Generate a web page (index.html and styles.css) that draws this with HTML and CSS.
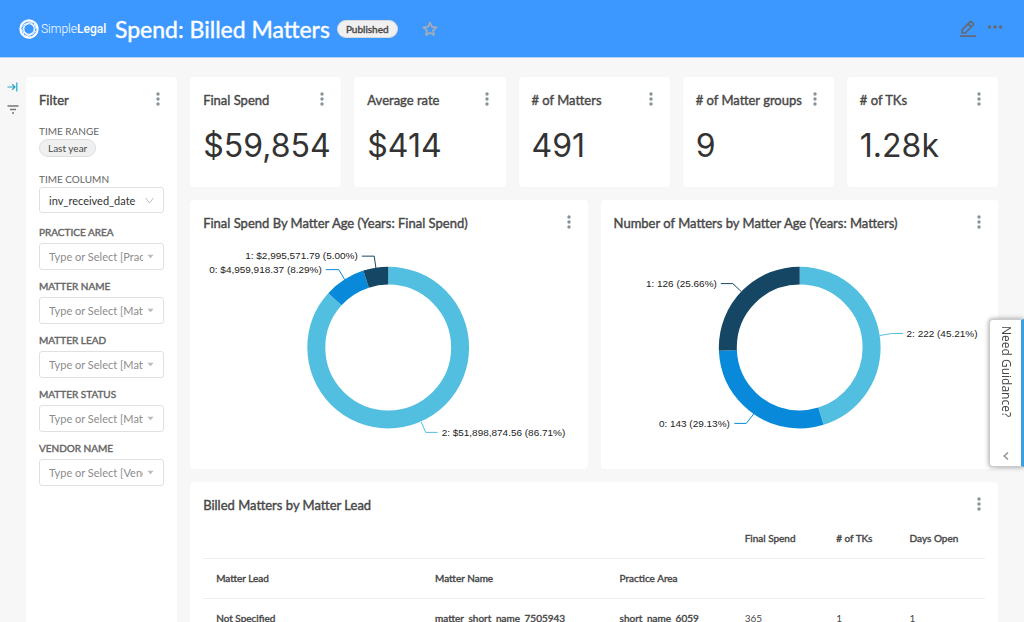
FILE: index.html
```html
<!DOCTYPE html>
<html lang="en">
<head>
<meta charset="utf-8">
<meta name="viewport" content="width=device-width, initial-scale=1">
<title>Spend: Billed Matters</title>
<link rel="stylesheet" href="styles.css">
</head>
<body>
<svg class="defs" aria-hidden="true">
  <symbol id="dots-v" viewBox="0 0 6 14"><circle cx="3" cy="2" r="1.7"/><circle cx="3" cy="7" r="1.7"/><circle cx="3" cy="12" r="1.7"/></symbol>
  <symbol id="caret" viewBox="0 0 8 5"><path d="M0.5 0.5h7L4 4.5z"/></symbol>
</svg>
<div class="app">
  <header class="topbar">
    <a class="brand" href="#" aria-label="SimpleLegal">
      <svg class="brand-mark" viewBox="0 0 20 20" fill="none" stroke="#fff">
        <g stroke-width="1.7">
          <path id="blade" d="M1.600 7.500C3.500 1.800 9.500 -.4 14.500 3.200"/>
          <use href="#blade" transform="rotate(60 10 10)"/><use href="#blade" transform="rotate(120 10 10)"/>
          <use href="#blade" transform="rotate(180 10 10)"/><use href="#blade" transform="rotate(240 10 10)"/>
          <use href="#blade" transform="rotate(300 10 10)"/>
        </g>
        <g stroke-width="1">
          <path id="inner" d="M2.500 8.500C5 4.200 10 2.800 14.800 7.200"/>
          <use href="#inner" transform="rotate(60 10 10)"/><use href="#inner" transform="rotate(120 10 10)"/>
          <use href="#inner" transform="rotate(180 10 10)"/><use href="#inner" transform="rotate(240 10 10)"/>
          <use href="#inner" transform="rotate(300 10 10)"/>
        </g>
      </svg>
      <span class="brand-name">Simple<b>Legal</b></span>
    </a>
    <h1 class="title">Spend: Billed Matters</h1>
    <span class="badge">Published</span>
    <button class="icon-btn star" aria-label="Favorite">
      <svg width="16" height="16" viewBox="0 0 16 16" fill="none" stroke="#a9adb3" stroke-width="1.700" stroke-linejoin="round"><path d="M8 1.600l1.900 4.200 4.600.5-3.400 3.100.9 4.500L8 11.700l-4 2.200.9-4.500L1.500 6.300l4.600-.5z"/></svg>
    </button>
    <div class="top-actions">
      <button class="icon-btn" aria-label="Edit dashboard">
        <svg width="16" height="18" viewBox="0 0 16 18" fill="none" stroke="#666a70" stroke-width="1.700"><path d="M2.200 13V9.800L9.900 1.900q.8-.8 1.600 0l1.500 1.500q.8.8 0 1.600L5.300 13zM8.200 3.800l3 3M0 16.200h16"/></svg>
      </button>
      <button class="icon-btn" aria-label="More options">
        <svg width="16" height="12" viewBox="0 0 16 12" fill="#666a70"><circle cx="2.500" cy="4" r="1.700"/><circle cx="8" cy="4" r="1.700"/><circle cx="13.500" cy="4" r="1.700"/></svg>
      </button>
    </div>
  </header>

  <div class="body">
    <nav class="rail">
      <button class="icon-btn" aria-label="Expand filters">
        <svg width="12" height="10" viewBox="0 0 12 10" fill="none" stroke="#20a7c9" stroke-width="1.200"><path d="M.5 5h7M5.200 2.300L8 5 5.200 7.700M9.800 .5v9"/></svg>
      </button>
      <button class="icon-btn" aria-label="Filters">
        <svg width="12" height="9" viewBox="0 0 12 9" fill="none" stroke="#777" stroke-width="1.300"><path d="M.5 1h11M3 4.500h6M5 8h2"/></svg>
      </button>
    </nav>

    <main class="grid">
      <section class="card filters">
        <div class="card-head"><h2>Filter</h2><button class="icon-btn menu" aria-label="Filter menu"><svg><use href="#dots-v"/></svg></button></div>
        <form class="filter-form">
          <div class="field range"><span class="label light">TIME RANGE</span><button type="button" class="chip">Last year</button></div>
          <div class="field column"><label class="label light" for="col">TIME COLUMN</label>
            <div class="pick solid"><select id="col"><option>inv_received_date</option></select><svg class="chev" viewBox="0 0 9 7"><path d="M.5 .8L4.500 6 8.500 .8"/></svg></div></div>
          <div class="field"><label class="label" for="pa">PRACTICE AREA</label>
            <div class="pick"><select id="pa"><option>Type or Select [Practice Area]</option></select><svg class="caret"><use href="#caret"/></svg></div></div>
          <div class="field"><label class="label" for="mn">MATTER NAME</label>
            <div class="pick"><select id="mn"><option>Type or Select [Matter Name]</option></select><svg class="caret"><use href="#caret"/></svg></div></div>
          <div class="field"><label class="label" for="ml">MATTER LEAD</label>
            <div class="pick"><select id="ml"><option>Type or Select [Matter Lead]</option></select><svg class="caret"><use href="#caret"/></svg></div></div>
          <div class="field"><label class="label" for="ms">MATTER STATUS</label>
            <div class="pick"><select id="ms"><option>Type or Select [Matter Status]</option></select><svg class="caret"><use href="#caret"/></svg></div></div>
          <div class="field"><label class="label" for="vn">VENDOR NAME</label>
            <div class="pick"><select id="vn"><option>Type or Select [Vendor Name]</option></select><svg class="caret"><use href="#caret"/></svg></div></div>
        </form>
      </section>

      <section class="card kpi"><div class="card-head"><h2>Final Spend</h2><button class="icon-btn menu" aria-label="Final Spend menu"><svg><use href="#dots-v"/></svg></button></div><p class="number">$59,854</p></section>
      <section class="card kpi"><div class="card-head"><h2>Average rate</h2><button class="icon-btn menu" aria-label="Average rate menu"><svg><use href="#dots-v"/></svg></button></div><p class="number">$414</p></section>
      <section class="card kpi"><div class="card-head"><h2># of Matters</h2><button class="icon-btn menu" aria-label="Matters menu"><svg><use href="#dots-v"/></svg></button></div><p class="number">491</p></section>
      <section class="card kpi"><div class="card-head"><h2># of Matter groups</h2><button class="icon-btn menu" aria-label="Matter groups menu"><svg><use href="#dots-v"/></svg></button></div><p class="number">9</p></section>
      <section class="card kpi"><div class="card-head"><h2># of TKs</h2><button class="icon-btn menu" aria-label="TKs menu"><svg><use href="#dots-v"/></svg></button></div><p class="number">1.28k</p></section>

      <div class="charts">
        <section class="card">
          <div class="card-head"><h2>Final Spend By Matter Age (Years: Final Spend)</h2><button class="icon-btn menu" aria-label="Chart menu"><svg><use href="#dots-v"/></svg></button></div>
          <svg class="donut" viewBox="0 0 398 225" role="img" aria-label="Final spend by matter age">
            <g class="ring" transform="rotate(-90 198.500 103.500)">
              <circle class="s2" cx="198.500" cy="103.500" r="72" pathLength="100" stroke-dasharray="86.710 100"/>
              <circle class="s0" cx="198.500" cy="103.500" r="72" pathLength="100" stroke-dasharray="8.290 100" stroke-dashoffset="-86.710"/>
              <circle class="s1" cx="198.500" cy="103.500" r="72" pathLength="100" stroke-dasharray="5 100" stroke-dashoffset="-95"/>
            </g>
            <g class="lead"><path class="s1" d="M172 12h12.500l1.700 12"/><path class="s0" d="M136 25.500h13l6 10"/><path class="s2" d="M231.500 178l4.500 10.500h12"/></g>
            <text x="168" y="15" text-anchor="end">1: $2,995,571.79 (5.00%)</text>
            <text x="132" y="29" text-anchor="end">0: $4,959,918.37 (8.29%)</text>
            <text x="252" y="192">2: $51,898,874.56 (86.71%)</text>
          </svg>
        </section>
        <section class="card">
          <div class="card-head"><h2>Number of Matters by Matter Age (Years: Matters)</h2><button class="icon-btn menu" aria-label="Chart menu"><svg><use href="#dots-v"/></svg></button></div>
          <svg class="donut" viewBox="0 0 398 225" role="img" aria-label="Number of matters by matter age">
            <g class="ring" transform="rotate(-90 199 103.500)">
              <circle class="s2" cx="199" cy="103.500" r="72" pathLength="100" stroke-dasharray="45.210 100"/>
              <circle class="s0" cx="199" cy="103.500" r="72" pathLength="100" stroke-dasharray="29.130 100" stroke-dashoffset="-45.210"/>
              <circle class="s1" cx="199" cy="103.500" r="72" pathLength="100" stroke-dasharray="25.660 100" stroke-dashoffset="-74.340"/>
            </g>
            <g class="lead"><path class="s1" d="M120 39.500h12l8.500 8"/><path class="s0" d="M133.500 179.500h12l7.500-9.500"/><path class="s2" d="M279 91.500l12-2h11.500"/></g>
            <text x="116" y="43" text-anchor="end">1: 126 (25.66%)</text>
            <text x="129" y="183" text-anchor="end">0: 143 (29.13%)</text>
            <text x="306" y="93">2: 222 (45.21%)</text>
          </svg>
        </section>
      </div>

      <section class="card matters">
        <div class="card-head"><h2>Billed Matters by Matter Lead</h2><button class="icon-btn menu" aria-label="Table menu"><svg><use href="#dots-v"/></svg></button></div>
        <table class="table">
          <colgroup><col class="c-lead"><col class="c-name"><col class="c-area"><col class="c-spend"><col class="c-tks"><col class="c-days"></colgroup>
          <thead>
            <tr><td colspan="3"></td><th>Final Spend</th><th># of TKs</th><th>Days Open</th></tr>
            <tr><th>Matter Lead</th><th>Matter Name</th><th>Practice Area</th><td colspan="3"></td></tr>
          </thead>
          <tbody>
            <tr><th>Not Specified</th><th>matter_short_name_7505943</th><th>short_name_6059</th><td>365</td><td>1</td><td>1</td></tr>
          </tbody>
        </table>
      </section>
    </main>
  </div>

  <button class="guidance"><span>Need Guidance?</span>
    <svg width="6" height="8" viewBox="0 0 6 8" fill="none" stroke="#999" stroke-width="1.600"><path d="M5 .5L1.200 4 5 7.500"/></svg>
  </button>
</div>
</body>
</html>
```
FILE: styles.css
```css
* { box-sizing: border-box; }
body { margin: 0; font-family: Lato, "Open Sans", sans-serif; font-size: 12px; color: #484848; background: #f7f7f7; }
h1, h2, p { margin: 0; }
button { font: inherit; color: inherit; cursor: pointer; }
.defs { display: none; }
.app { height: 100vh; display: flex; flex-direction: column; overflow: hidden; }
.icon-btn { display: flex; align-items: center; justify-content: center; padding: 0; border: 0; background: none; }
.title, .badge, .card-head h2, .label, .table th { font-weight: 400; -webkit-text-stroke: 0.4px currentColor; }

.topbar { flex: none; height: 58px; display: flex; align-items: center; padding: 0 21px 0 19px; background: #3c98ff; border-bottom: 1px solid #b4d5fa; }
.brand { display: flex; align-items: center; gap: 2px; color: #fff; text-decoration: none; }
.brand-mark { width: 20px; height: 20px; }
.brand-name { width: 74px; font: 300 12px/20px Roboto, sans-serif; }
.brand-name b { font-weight: 500; }
.title { color: #fff; font-size: 23px; line-height: 32px; white-space: nowrap; }
.badge { margin-left: 7px; padding: 0 8px; border: 1px solid #d5d9de; border-radius: 9px; background: #f0f0f0; font-size: 10px; line-height: 16px; }
.star { margin-left: 24px; }
.top-actions { margin-left: auto; display: flex; align-items: center; gap: 11px; }

.body { flex: 1; min-height: 0; display: flex; }
.rail { flex: none; width: 26px; padding-top: 24px; display: flex; flex-direction: column; align-items: center; gap: 13px; }
.grid { flex: 1; min-width: 0; display: grid; grid-template-columns: repeat(6, minmax(0, 1fr)); grid-template-rows: auto auto 1fr; gap: 13px; padding: 19px 26px 0 0; overflow: hidden; }
.card { background: #fff; border-radius: 4px; min-width: 0; }
.card-head { display: flex; align-items: flex-start; justify-content: space-between; padding: 13px 13px 0; }
.card-head h2 { font-size: 13px; line-height: 20px; white-space: nowrap; }
.menu { width: 12px; height: 18px; fill: #879399; }
.menu svg { width: 6px; height: 14px; }

.filters { grid-row: 1 / span 3; }
.filter-form { padding: 14px 13px 0; display: flex; flex-direction: column; gap: 9px; }
.field { display: flex; flex-direction: column; align-items: stretch; gap: 4px; }
.range, .column { gap: 1px; }
.range { margin-bottom: 6px; }
.column { margin-bottom: 3px; }
.label { font-size: 10px; line-height: 14px; color: #666; }
.light { -webkit-text-stroke: 0; }
.chip { align-self: flex-start; height: 18px; padding: 0 8px; border: 1px solid #dedede; border-radius: 9px; background: #f0f0f0; font-size: 10px; line-height: 16px; }
.pick { display: grid; align-items: center; }
.pick > * { grid-area: 1 / 1; }
.pick select { width: 100%; min-width: 0; height: 27px; padding: 0 20px 0 9px; border: 1px solid #e0e0e0; border-radius: 3px; background: #fff; appearance: none; font: 11px Lato, sans-serif; color: #8c8c8c; }
.pick.solid select { height: 26px; color: #333; }
.caret, .chev { justify-self: end; margin-right: 10px; pointer-events: none; }
.caret { width: 7px; height: 5px; fill: #bbb; }
.chev { width: 9px; height: 7px; fill: none; stroke: #bfbfbf; }

.kpi { padding-bottom: 19px; }
.number { padding: 14px 13px 0; font: 400 32px/44px Inter, sans-serif; color: #333; white-space: nowrap; }

.charts { grid-column: 2 / -1; display: grid; grid-template-columns: 1fr 1fr; gap: 13px; }
.donut { display: block; width: 100%; height: 225px; margin-top: 11px; }
.donut text { font: 10px "Liberation Sans", Arial, sans-serif; fill: #222; }
.ring circle { fill: none; stroke-width: 18; }
.lead path { fill: none; stroke-width: 1; }
.s2 { stroke: #52bfe0; }
.s0 { stroke: #0889d9; }
.s1 { stroke: #154765; }

.matters { grid-column: 2 / -1; padding-bottom: 13px; min-height: 150px; }
.table { width: calc(100% - 26px); margin: 3px 13px 0; border-collapse: collapse; table-layout: fixed; font-size: 10px; line-height: 14px; }
.table th, .table td { height: 40px; padding: 0 13px; text-align: left; border-bottom: 1px solid #eee; white-space: nowrap; }
.c-lead { width: 28%; }
.c-name { width: 23.600%; }
.c-area { width: 16%; }
.c-spend { width: 11.700%; }
.c-tks { width: 9.400%; }
.c-days { width: 11.300%; }

.guidance { position: fixed; right: 0; top: 319px; width: 35px; height: 148px; padding: 6px 0; display: flex; flex-direction: column; align-items: center; justify-content: space-between; border: 1px solid #ccc; border-right: 3px solid #3ba0e0; border-radius: 4px 0 0 4px; background: #fff; box-shadow: 0 0 5px rgba(0, 0, 0, .4); }
.guidance span { writing-mode: vertical-rl; font: 12px/16px "Open Sans", sans-serif; color: #444; }
```
